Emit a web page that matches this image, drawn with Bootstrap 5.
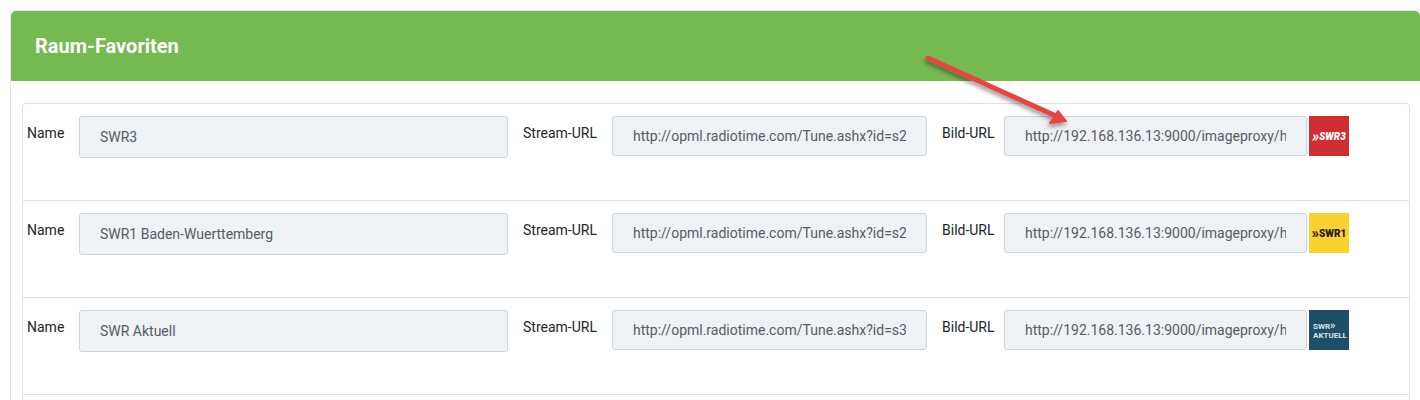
<!DOCTYPE html>
<html lang="de">
<head>
  <meta charset="UTF-8">
  <meta name="viewport" content="width=device-width, initial-scale=1.0">
  <title>Raum-Favoriten</title>
  <link href="https://cdn.jsdelivr.net/npm/bootstrap@5.3.2/dist/css/bootstrap.min.css" rel="stylesheet">
  <style>
    html, body { height: 400px; overflow: hidden; }
    body { font-family: Roboto, "Liberation Sans", sans-serif; font-size: 14px; color: #212529; background: #fff; padding: 10px 0 0 10px; }
    .fav-panel { width: 1410px; height: 390px; overflow: hidden; border-color: #e3e6e8; border-width: 1px 0 0 1px; border-radius: 2px 0 0 0; }
    .fav-head { background: #75b951; color: #fff; height: 70px; flex: none; padding: 0 24px; border: 0; border-radius: 2px 0 0 0; font-size: 20px; font-weight: 700; }
    .fav-body { padding: 22px 0 0 11px; }
    .fav-list { width: 1388px; --bs-list-group-border-color: #dfe2e5; --bs-list-group-border-radius: 4px; }
    .fav-row { height: 97px; flex: none; padding: 12px 0 0 4px; font-size: 14px; }
    .fav-row:first-child { height: 98px; }
    .fav-label { line-height: 21px; padding-top: 7px; }
    .label-name { width: 52px; }
    .label-stream { width: 89px; margin-left: 15px; }
    .label-bild { width: 62px; margin-left: 15px; }
    .fav-input { height: 40px; padding: 0 20px; font-size: 14px; color: #555b61; border-color: #ced4da; border-radius: 3px; }
    .fav-input:disabled { background: #eff2f5; }
    .input-name { width: 429px; height: 42px; }
    .input-stream { width: 315px; }
    .input-bild { width: 303px; }
    .station-logo { width: 40px; height: 40px; flex: none; margin-left: 2px; font-size: 10px; font-weight: 900; line-height: 9px; white-space: nowrap; }
    .logo-mark { font-size: 14px; }
    .logo-swr3 { background: #cf2e33; color: #fff; font-style: italic; }
    .logo-swr1 { background: #fbd12f; color: #1f1d12; }
    .logo-aktuell { background: #1f4e68; color: #d8e4ea; font-size: 8px; font-weight: 700; line-height: 9px; padding-left: 4px; }
    .logo-aktuell .logo-mark { font-size: 11px; }
    .fav-arrow { position: absolute; left: 920px; top: 50px; width: 155px; height: 80px; pointer-events: none; }
  </style>
</head>
<body>
  <div class="card fav-panel">
    <div class="card-header fav-head d-flex align-items-center">Raum-Favoriten</div>
    <div class="card-body fav-body">
      <ul class="list-group fav-list">
        <li class="list-group-item fav-row d-flex align-items-start">
          <label class="fav-label label-name">Name</label>
          <input class="form-control fav-input input-name" value="SWR3" disabled>
          <label class="fav-label label-stream">Stream-URL</label>
          <input class="form-control fav-input input-stream" value="http://opml.radiotime.com/Tune.ashx?id=s24940&amp;formats=aac" disabled>
          <label class="fav-label label-bild">Bild-URL</label>
          <input class="form-control fav-input input-bild" value="http://192.168.136.13:9000/imageproxy/http%3A%2F%2Fcdn" disabled>
          <div class="station-logo logo-swr3 d-flex align-items-center justify-content-center"><span class="logo-mark">»</span>SWR3</div>
        </li>
        <li class="list-group-item fav-row d-flex align-items-start">
          <label class="fav-label label-name">Name</label>
          <input class="form-control fav-input input-name" value="SWR1 Baden-Wuerttemberg" disabled>
          <label class="fav-label label-stream">Stream-URL</label>
          <input class="form-control fav-input input-stream" value="http://opml.radiotime.com/Tune.ashx?id=s24896&amp;formats=aac" disabled>
          <label class="fav-label label-bild">Bild-URL</label>
          <input class="form-control fav-input input-bild" value="http://192.168.136.13:9000/imageproxy/http%3A%2F%2Fcdn" disabled>
          <div class="station-logo logo-swr1 d-flex align-items-center justify-content-center"><span class="logo-mark">»</span>SWR1</div>
        </li>
        <li class="list-group-item fav-row d-flex align-items-start">
          <label class="fav-label label-name">Name</label>
          <input class="form-control fav-input input-name" value="SWR Aktuell" disabled>
          <label class="fav-label label-stream">Stream-URL</label>
          <input class="form-control fav-input input-stream" value="http://opml.radiotime.com/Tune.ashx?id=s31045&amp;formats=aac" disabled>
          <label class="fav-label label-bild">Bild-URL</label>
          <input class="form-control fav-input input-bild" value="http://192.168.136.13:9000/imageproxy/http%3A%2F%2Fcdn" disabled>
          <div class="station-logo logo-aktuell d-flex align-items-center"><div>SWR<span class="logo-mark">»</span><br>AKTUELL</div></div>
        </li>
        <li class="list-group-item fav-row"></li>
      </ul>
    </div>
  </div>

  <!-- red annotation arrow lying over the form -->
  <svg class="fav-arrow" viewBox="920 50 155 80">
    <defs>
      <filter id="arrowShadow" x="-10%" y="-20%" width="120%" height="150%">
        <feDropShadow dx="-1" dy="3" stdDeviation="2" flood-color="#000" flood-opacity=".4"/>
      </filter>
    </defs>
    <g filter="url(#arrowShadow)">
      <path d="M928 58 L1056 116" stroke="#e8453f" stroke-width="5" stroke-linecap="round" fill="none"/>
      <path d="M1066 121 L1050 123 L1058 111 Z" fill="#e8453f" stroke="#e8453f" stroke-width="2" stroke-linejoin="round"/>
    </g>
  </svg>

  <script src="https://cdn.jsdelivr.net/npm/bootstrap@5.3.2/dist/js/bootstrap.bundle.min.js"></script>
</body>
</html>
